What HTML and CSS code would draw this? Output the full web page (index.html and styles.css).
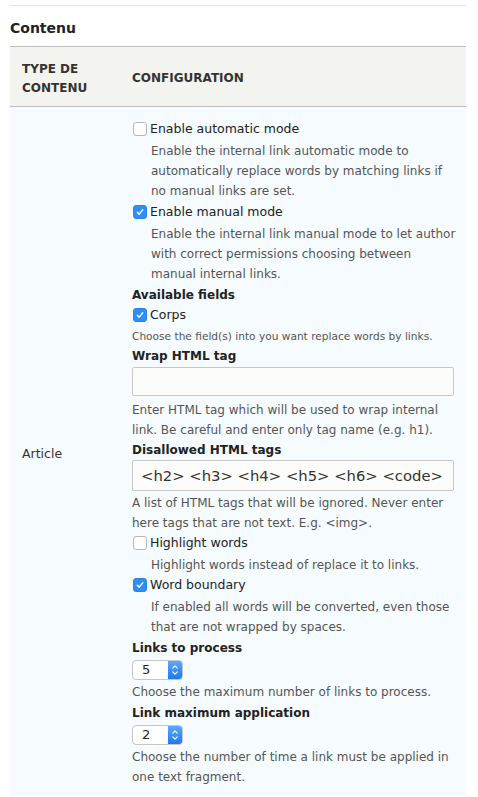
FILE: index.html
```html
<!DOCTYPE html>
<html>
<head>
<meta charset="utf-8">
<link rel="stylesheet" href="styles.css">
</head>
<body>
<div class="page">
  <div class="rule"></div>
  <h2 class="title">Contenu</h2>
  <table class="tbl">
    <thead>
      <tr>
        <th class="col-type">Type de<br>contenu</th>
        <th class="col-conf">Configuration</th>
      </tr>
    </thead>
    <tbody>
      <tr>
        <td class="cell-type">Article</td>
        <td class="cell-conf">
          <div class="chk-item">
            <label class="chk"><span class="box"></span>Enable automatic mode</label>
            <div class="desc indent">Enable the internal link automatic mode to automatically replace words by matching links if no manual links are set.</div>
          </div>
          <div class="chk-item">
            <label class="chk"><span class="box on"><svg viewBox="0 0 13 13"><path d="M3.6 6.8 L5.6 8.8 L9.4 4.2" fill="none" stroke="#fff" stroke-width="1.6" stroke-linecap="round" stroke-linejoin="round"/></svg></span>Enable manual mode</label>
            <div class="desc indent">Enable the internal link manual mode to let author with correct permissions choosing between manual internal links.</div>
          </div>
          <div class="field-label">Available fields</div>
          <label class="chk"><span class="box on"><svg viewBox="0 0 13 13"><path d="M3.6 6.8 L5.6 8.8 L9.4 4.2" fill="none" stroke="#fff" stroke-width="1.6" stroke-linecap="round" stroke-linejoin="round"/></svg></span>Corps</label>
          <div class="desc small">Choose the field(s) into you want replace words by links.</div>
          <div class="field-label">Wrap HTML tag</div>
          <div class="input"></div>
          <div class="desc after-input">Enter HTML tag which will be used to wrap internal link. Be careful and enter only tag name (e.g. h1).</div>
          <div class="field-label">Disallowed HTML tags</div>
          <div class="input big">&lt;h2&gt; &lt;h3&gt; &lt;h4&gt; &lt;h5&gt; &lt;h6&gt; &lt;code&gt;</div>
          <div class="desc after-input2">A list of HTML tags that will be ignored. Never enter here tags that are not text. E.g. &lt;img&gt;.</div>
          <div class="chk-item tight">
            <label class="chk"><span class="box"></span>Highlight words</label>
            <div class="desc indent">Highlight words instead of replace it to links.</div>
          </div>
          <div class="chk-item">
            <label class="chk"><span class="box on"><svg viewBox="0 0 13 13"><path d="M3.6 6.8 L5.6 8.8 L9.4 4.2" fill="none" stroke="#fff" stroke-width="1.6" stroke-linecap="round" stroke-linejoin="round"/></svg></span>Word boundary</label>
            <div class="desc indent">If enabled all words will be converted, even those that are not wrapped by spaces.</div>
          </div>
          <div class="field-label">Links to process</div>
          <div class="select"><span class="val">5</span><span class="arrows"><svg viewBox="0 0 14 20"><path d="M4.5 8 L7 5.5 L9.5 8 M4.5 12 L7 14.5 L9.5 12" fill="none" stroke="#fff" stroke-width="1.3" stroke-linecap="round" stroke-linejoin="round"/></svg></span></div>
          <div class="desc after-select">Choose the maximum number of links to process.</div>
          <div class="field-label lift">Link maximum application</div>
          <div class="select"><span class="val">2</span><span class="arrows"><svg viewBox="0 0 14 20"><path d="M4.5 8 L7 5.5 L9.5 8 M4.5 12 L7 14.5 L9.5 12" fill="none" stroke="#fff" stroke-width="1.3" stroke-linecap="round" stroke-linejoin="round"/></svg></span></div>
          <div class="desc after-select">Choose the number of time a link must be applied in one text fragment.</div>
        </td>
      </tr>
    </tbody>
  </table>
</div>
</body>
</html>
```

FILE: styles.css
```css
html, body {
  margin: 0;
  padding: 0;
  background: #fff;
}
body {
  font-family: "DejaVu Sans", Verdana, sans-serif;
  font-size: 12px;
  color: #333;
}
.page {
  padding: 5px 12px 0 10px;
}
.rule {
  border-top: 1px solid #e4e4e2;
}
.title {
  margin: 0;
  padding: 12px 0 0;
  height: 28px;
  font-size: 14px;
  font-weight: bold;
  color: #222;
  line-height: 20px;
}
.tbl {
  width: 100%;
  border-collapse: collapse;
}
.tbl th {
  background: #f3f3ef;
  border-top: 1px solid #bfbfba;
  border-bottom: 1px solid #bfbfba;
  text-align: left;
  text-transform: uppercase;
  font-size: 12px;
  font-weight: bold;
  color: #333;
  line-height: 19px;
  height: 60px;
  padding: 4px 0 0 12px;
  box-sizing: border-box;
}
.col-type {
  width: 110px;
  box-sizing: border-box;
}
.tbl td {
  background: #f5fbfe;
  vertical-align: top;
}
.cell-type {
  vertical-align: middle !important;
  padding: 3px 0 0 12px;
  font-size: 12.5px;
  color: #333;
}
.cell-conf {
  padding: 12px 8px 9px 12px;
  line-height: 20px;
}
.chk {
  display: flex;
  align-items: center;
  font-size: 12.5px;
  color: #222;
  height: 20px;
}
.box {
  width: 12px;
  height: 12px;
  border: 1px solid #b5b5b5;
  border-radius: 3px;
  background: #fff;
  margin: 0 3px 0 1px;
  box-sizing: content-box;
  flex: none;
  display: flex;
}
.box.on {
  background: #2f8ef5;
  border-color: #2a83e8;
}
.box svg {
  width: 12px;
  height: 12px;
}
.chk-item .desc.indent {
  margin-top: 2px;
  padding-left: 19px;
  margin-bottom: 1px;
}
.chk-item.tight .desc.indent {
  margin-bottom: 0;
}
.desc {
  color: #555;
  font-size: 12px;
  line-height: 20px;
}
.desc.small {
  font-size: 10.6px;
  line-height: 20px;
  margin-top: 1px;
}
.field-label {
  font-weight: bold;
  color: #222;
  font-size: 12px;
  height: 20px;
}
.field-label.lift {
  margin-top: 1px;
}
.input {
  margin-top: 1px;
  width: 322px;
  height: 29px;
  border: 1px solid #c8c8c8;
  border-radius: 2px;
  background: #fcfcfa;
  box-sizing: border-box;
}
.input.big {
  margin-top: 0;
  height: 31px;
  font-size: 14.8px;
  color: #333;
  padding: 0 0 0 8px;
  line-height: 29px;
  white-space: nowrap;
  overflow: hidden;
}
.after-input {
  margin-top: 4px;
}
.after-input2 {
  margin-top: 2px;
}
.after-select {
  margin-top: 2px;
}
.select {
  margin-top: 2px;
  width: 51px;
  height: 20px;
  display: flex;
  border: 1px solid #c6c6c6;
  border-radius: 4px;
  background: #fff;
  box-sizing: border-box;
  overflow: hidden;
}
.select .val {
  flex: 1;
  font-size: 13px;
  color: #222;
  line-height: 18px;
  padding-left: 9px;
}
.select .arrows {
  width: 14px;
  background: linear-gradient(#5aa9fb, #1f78f0);
  display: flex;
}
.select .arrows svg {
  width: 14px;
  height: 18px;
}
```
